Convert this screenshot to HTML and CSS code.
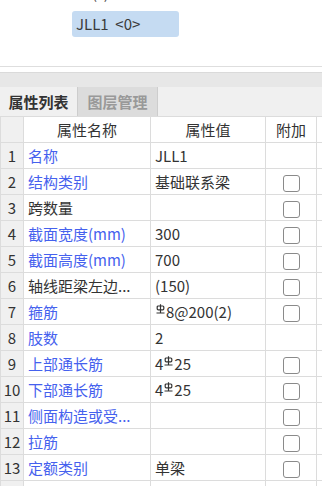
FILE: index.html
```html
<!DOCTYPE html>
<html lang="zh-CN">

<head>
    <meta charset="UTF-8">
    <title>属性列表</title>
    <link rel="stylesheet" href="styles.css">
</head>

<body>

    <!-- drawing canvas, top part -->
    <div class="canvas">
        <div class="prev-label"><span>(&nbsp;&nbsp;)</span></div>
        <div class="tag">JLL1&nbsp;&nbsp;&lt;0&gt;</div>
    </div>

    <div class="splitter"></div>

    <div class="tabs">
        <div class="tab active">属性列表</div>
        <div class="tab">图层管理</div>
    </div>

    <table class="props">
        <colgroup>
            <col class="c-num">
            <col class="c-name">
            <col class="c-value">
            <col class="c-extra">
            <col>
        </colgroup>
        <thead>
            <tr>
                <th class="num"></th>
                <th>属性名称</th>
                <th>属性值</th>
                <th>附加</th>
                <th></th>
            </tr>
        </thead>
        <tbody>
            <tr>
                <td class="num">1</td>
                <td class="blue">名称</td>
                <td>JLL1</td>
                <td></td>
                <td></td>
            </tr>
            <tr>
                <td class="num">2</td>
                <td class="blue">结构类别</td>
                <td>基础联系梁</td>
                <td class="chk"><span class="box"></span></td>
                <td></td>
            </tr>
            <tr>
                <td class="num">3</td>
                <td>跨数量</td>
                <td></td>
                <td class="chk"><span class="box"></span></td>
                <td></td>
            </tr>
            <tr>
                <td class="num">4</td>
                <td class="blue">截面宽度(mm)</td>
                <td>300</td>
                <td class="chk"><span class="box"></span></td>
                <td></td>
            </tr>
            <tr>
                <td class="num">5</td>
                <td class="blue">截面高度(mm)</td>
                <td>700</td>
                <td class="chk"><span class="box"></span></td>
                <td></td>
            </tr>
            <tr>
                <td class="num">6</td>
                <td>轴线距梁左边...</td>
                <td>(150)</td>
                <td class="chk"><span class="box"></span></td>
                <td></td>
            </tr>
            <tr>
                <td class="num">7</td>
                <td class="blue">箍筋</td>
                <td><svg class="rebar" viewBox="0 0 9 10"><rect x="1.2" y="2" width="6.6" height="3.8" rx="1" /><path d="M4.5 0.2V8.8M0.5 9H8.5" /></svg>8@200(2)</td>
                <td class="chk"><span class="box"></span></td>
                <td></td>
            </tr>
            <tr>
                <td class="num">8</td>
                <td class="blue">肢数</td>
                <td>2</td>
                <td></td>
                <td></td>
            </tr>
            <tr>
                <td class="num">9</td>
                <td class="blue">上部通长筋</td>
                <td>4<svg class="rebar" viewBox="0 0 9 10"><rect x="1.2" y="2" width="6.6" height="3.8" rx="1" /><path d="M4.5 0.2V8.8M0.5 9H8.5" /></svg>25</td>
                <td class="chk"><span class="box"></span></td>
                <td></td>
            </tr>
            <tr>
                <td class="num">10</td>
                <td class="blue">下部通长筋</td>
                <td>4<svg class="rebar" viewBox="0 0 9 10"><rect x="1.2" y="2" width="6.6" height="3.8" rx="1" /><path d="M4.5 0.2V8.8M0.5 9H8.5" /></svg>25</td>
                <td class="chk"><span class="box"></span></td>
                <td></td>
            </tr>
            <tr>
                <td class="num">11</td>
                <td class="blue">侧面构造或受...</td>
                <td></td>
                <td class="chk"><span class="box"></span></td>
                <td></td>
            </tr>
            <tr>
                <td class="num">12</td>
                <td class="blue">拉筋</td>
                <td></td>
                <td class="chk"><span class="box"></span></td>
                <td></td>
            </tr>
            <tr>
                <td class="num">13</td>
                <td class="blue">定额类别</td>
                <td>单梁</td>
                <td class="chk"><span class="box"></span></td>
                <td></td>
            </tr>
            <tr>
                <td class="num"></td>
                <td></td>
                <td></td>
                <td></td>
                <td></td>
            </tr>
        </tbody>
    </table>

</body>

</html>
```

FILE: styles.css
```css
body {
    margin: 0;
    width: 322px;
    height: 486px;
    overflow: hidden;
    font-family: "Noto Sans CJK SC", "Noto Sans", sans-serif;
    font-size: 15px;
    color: #333;
    background-color: #fff;
}

.canvas {
    height: 67px;
    padding-left: 72px;
    box-sizing: border-box;
    border-bottom: 1px solid #dedede;
}

.prev-label {
    height: 11px;
    overflow: hidden;
    padding-left: 20px;
    color: #555;
}

.prev-label span {
    display: block;
    margin-top: -17px;
    line-height: 20px;
}

.tag {
    width: 107px;
    height: 26px;
    line-height: 26px;
    padding-left: 4px;
    box-sizing: border-box;
    background-color: #c5dbf2;
    border-radius: 3px;
    color: #3a3a3a;
    white-space: nowrap;
}

.splitter {
    margin-top: 5px;
    height: 15px;
    background-color: #e7e7e7;
    border-top: 1px solid #dadada;
    box-sizing: border-box;
}

.tabs {
    display: flex;
    height: 29px;
    background-color: #f0f0f0;
}

.tab {
    line-height: 29px;
    padding: 0 6px;
    font-weight: bold;
    color: #999;
    background-color: #dcdcdc;
    border: 1px solid #cdcdcd;
    border-top: none;
    border-bottom: none;
    width: 81px;
    box-sizing: border-box;
    text-align: center;
}

.tab.active {
    width: 77px;
    color: #333;
    background-color: #f0f0f0;
    border: none;
}

.props {
    border-collapse: collapse;
    table-layout: fixed;
    width: 328px;
}

.c-num {
    width: 23px;
}

.c-name {
    width: 127px;
}

.c-value {
    width: 115px;
}

.c-extra {
    width: 51px;
}

.props th,
.props td {
    height: 25px;
    padding: 0 4px;
    border: 1px solid #dcdcdc;
    white-space: nowrap;
    overflow: hidden;
    font-weight: normal;
    text-align: left;
}

.props th {
    text-align: center;
    height: 25px;
}

.props .num {
    padding: 0;
    text-align: center;
    background-color: #f0f0f0;
}

.props .blue {
    color: #4561ee;
}

.props .chk {
    text-align: center;
    padding: 0;
}

.box {
    display: inline-block;
    width: 15px;
    height: 15px;
    border: 1px solid #8a8a8a;
    border-radius: 3px;
    vertical-align: middle;
    background-color: #fff;
}

.rebar {
    width: 9px;
    height: 10px;
    vertical-align: 4px;
    margin: 0 1px;
    fill: none;
    stroke: #333;
    stroke-width: 1.2;
}
```
